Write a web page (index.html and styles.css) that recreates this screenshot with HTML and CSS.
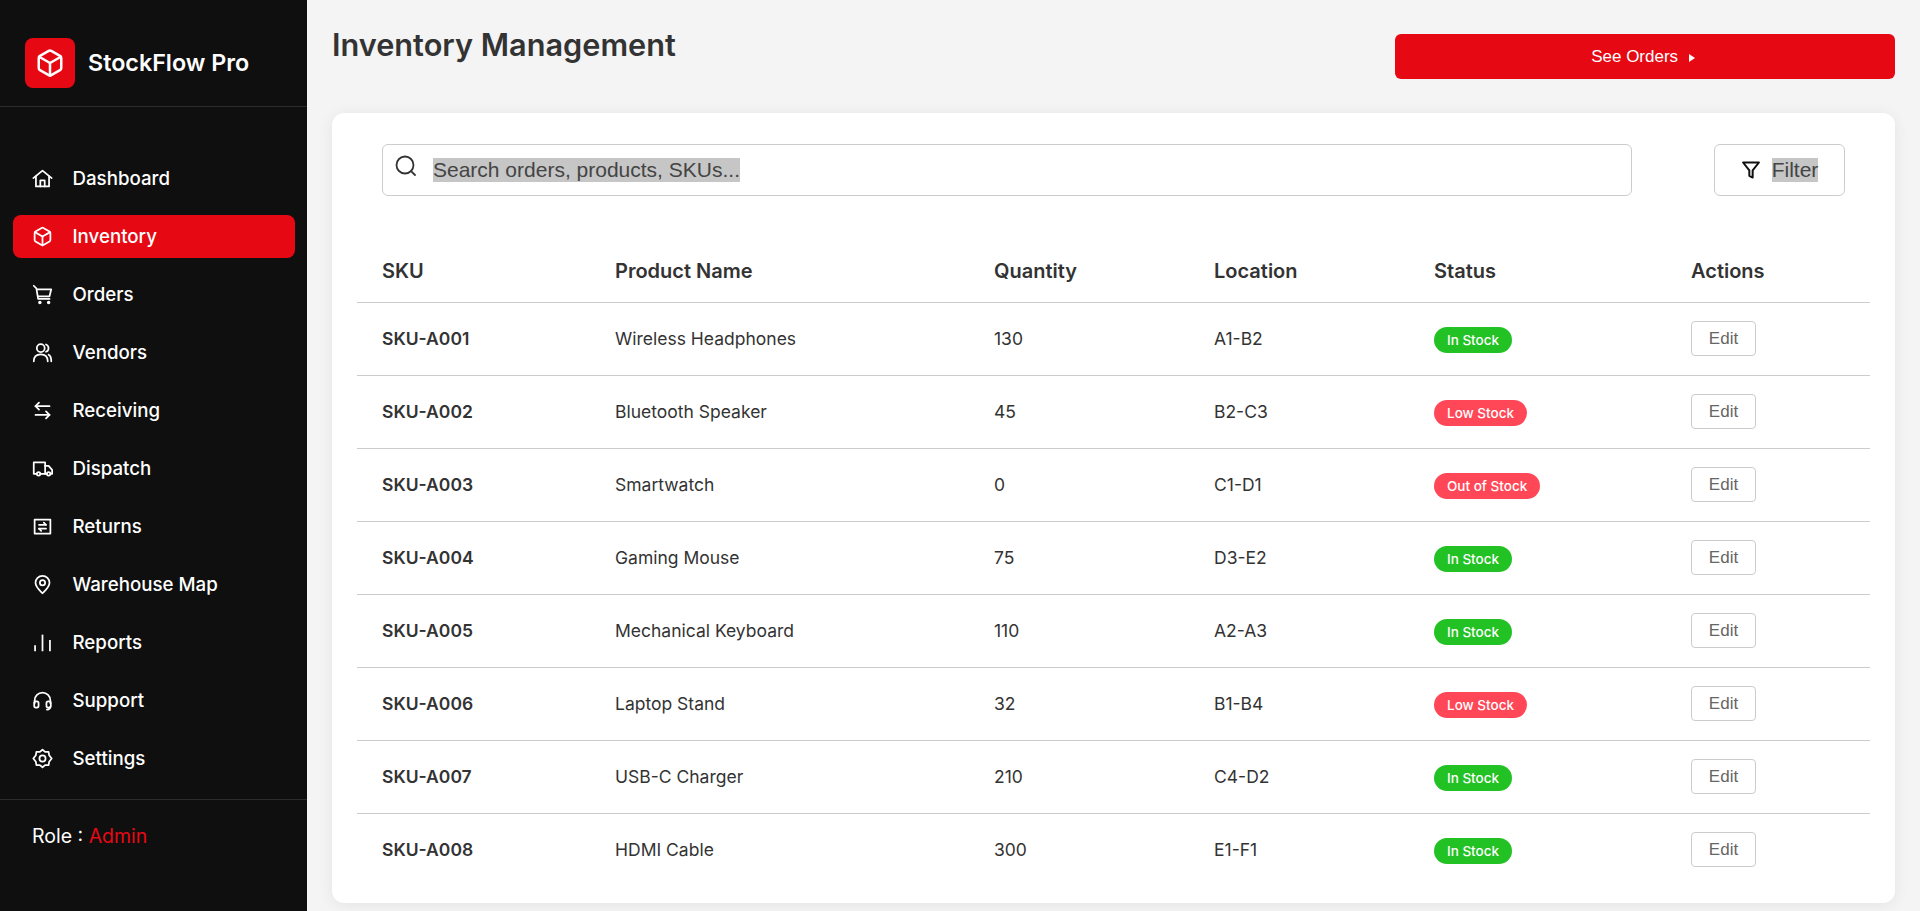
FILE: index.html
```html
<!DOCTYPE html>
<html lang="en">
<head>
    <meta charset="UTF-8">
    <meta name="viewport" content="width=device-width, initial-scale=1.0">
    <title>StockFlow Pro</title>
    <link rel="stylesheet" href="styles.css">
</head>
<body>
    <!-- Icon set, drawn once and reused below -->
    <svg class="sprite" aria-hidden="true">
        <symbol id="i-house" viewBox="0 0 24 24"><path d="M1.500 11.500 12 3l10.500 8.500"/><path d="M4.500 9.500V21h15V9.500"/><path d="M9.500 21v-7h5v7"/></symbol>
        <symbol id="i-box" viewBox="0 0 24 24"><path d="M21 8a2 2 0 0 0-1-1.730l-7-4a2 2 0 0 0-2 0l-7 4A2 2 0 0 0 3 8v8a2 2 0 0 0 1 1.730l7 4a2 2 0 0 0 2 0l7-4A2 2 0 0 0 21 16Z"/><path d="M3.300 7 12 12l8.700-5"/><path d="M12 22V12"/></symbol>
        <symbol id="i-cart" viewBox="0 0 24 24"><circle cx="9" cy="21" r="1"/><circle cx="19" cy="21" r="1"/><path d="M2 2l3 3 2 12h13"/><path d="M5.500 6H22l-2 8H7"/></symbol>
        <symbol id="i-users" viewBox="0 0 24 24"><circle cx="10" cy="7" r="4.500"/><path d="M2 22c0-5 3-8 8-8s8 3 8 8"/><path d="M16 2.800a4.500 4.500 0 0 1 0 8.400"/><path d="M19 14.500c2 1 3 4 3 7.500"/></symbol>
        <symbol id="i-swap" viewBox="0 0 24 24"><path d="M8 3 4 7l4 4"/><path d="M4 7h16"/><path d="m16 13 4 4-4 4"/><path d="M20 17H4"/></symbol>
        <symbol id="i-truck" viewBox="0 0 24 24"><path d="M5.500 18H2V5h13v13H9.500"/><path d="M15 9h4l4 4.500V18h-2"/><path d="M15 18h2"/><circle cx="7.500" cy="18" r="2"/><circle cx="19" cy="18" r="2"/></symbol>
        <symbol id="i-returns" viewBox="0 0 24 24"><rect x="3" y="4" width="18" height="16"/><path d="M8 10h8"/><path d="m13.500 7.500 2.500 2.500"/><path d="M16 14.500H8"/><path d="m10.500 17-2.500-2.500"/></symbol>
        <symbol id="i-pin" viewBox="0 0 24 24"><path d="M20 10c0 5-5.500 9.500-8 12-2.500-2.500-8-7-8-12a8 8 0 0 1 16 0Z"/><circle cx="12" cy="10" r="3"/></symbol>
        <symbol id="i-bars" viewBox="0 0 24 24"><path class="butt" d="M3.500 22v-7"/><path class="butt" d="M12 22V3"/><path class="butt" d="M20.500 22V9"/></symbol>
        <symbol id="i-headset" viewBox="0 0 24 24"><path d="M3 15v-3a9 9 0 0 1 18 0v3"/><rect x="2.500" y="13" width="5" height="7" rx="2"/><rect x="16.500" y="13" width="5" height="7" rx="2"/><path d="M21 19c0 2-1 3-4 3.500"/></symbol>
        <symbol id="i-gear" viewBox="0 0 24 24"><path d="M12 2l3 2.500 4-.2.600 4 2.900 3.700-2.900 3.700-.6 4-4-.2-3 2.500-3-2.500-4 .2-.6-4L1.500 12l2.900-3.700.6-4 4 .2Z"/><circle cx="12" cy="12" r="3.500"/></symbol>
    </svg>

    <div class="layout">
        <aside class="sidebar">
            <div class="brand">
                <span class="brand-logo"><svg><use href="#i-box"/></svg></span>
                <span class="brand-name">StockFlow Pro</span>
            </div>

            <nav class="nav">
                <a class="nav-item" href="#"><svg><use href="#i-house"/></svg>Dashboard</a>
                <a class="nav-item active" href="#"><svg><use href="#i-box"/></svg>Inventory</a>
                <a class="nav-item" href="#"><svg><use href="#i-cart"/></svg>Orders</a>
                <a class="nav-item" href="#"><svg><use href="#i-users"/></svg>Vendors</a>
                <a class="nav-item" href="#"><svg><use href="#i-swap"/></svg>Receiving</a>
                <a class="nav-item" href="#"><svg><use href="#i-truck"/></svg>Dispatch</a>
                <a class="nav-item" href="#"><svg><use href="#i-returns"/></svg>Returns</a>
                <a class="nav-item" href="#"><svg><use href="#i-pin"/></svg>Warehouse Map</a>
                <a class="nav-item" href="#"><svg><use href="#i-bars"/></svg>Reports</a>
                <a class="nav-item" href="#"><svg><use href="#i-headset"/></svg>Support</a>
                <a class="nav-item" href="#"><svg><use href="#i-gear"/></svg>Settings</a>
            </nav>

            <div class="role">Role : <span class="role-name">Admin</span></div>
        </aside>

        <main class="main">
            <div class="top-row">
                <h1 class="page-title">Inventory Management</h1>
                <button class="see-orders" type="button">See Orders <span class="caret"></span></button>
            </div>

            <section class="card">
                <div class="toolbar">
                    <div class="search">
                        <svg class="search-icon" viewBox="0 0 24 24"><circle cx="11" cy="11" r="8.500"/><path d="m21 21-3.700-3.700"/></svg>
                        <span class="highlight">Search orders, products, SKUs...</span>
                    </div>
                    <button class="filter" type="button">
                        <svg class="filter-icon" viewBox="0 0 24 24"><path d="M2.500 3h19l-7.500 9.500V21l-4-2v-6.500Z"/></svg>
                        <span class="highlight">Filter</span>
                    </button>
                </div>

                <table class="stock-table">
                    <thead>
                        <tr>
                            <th class="col-sku">SKU</th>
                            <th class="col-name">Product Name</th>
                            <th class="col-qty">Quantity</th>
                            <th class="col-loc">Location</th>
                            <th class="col-status">Status</th>
                            <th>Actions</th>
                        </tr>
                    </thead>
                    <tbody>
                        <tr>
                            <td class="sku">SKU-A001</td><td>Wireless Headphones</td><td>130</td><td>A1-B2</td>
                            <td><span class="badge in">In Stock</span></td><td><button class="edit" type="button">Edit</button></td>
                        </tr>
                        <tr>
                            <td class="sku">SKU-A002</td><td>Bluetooth Speaker</td><td>45</td><td>B2-C3</td>
                            <td><span class="badge low">Low Stock</span></td><td><button class="edit" type="button">Edit</button></td>
                        </tr>
                        <tr>
                            <td class="sku">SKU-A003</td><td>Smartwatch</td><td>0</td><td>C1-D1</td>
                            <td><span class="badge low">Out of Stock</span></td><td><button class="edit" type="button">Edit</button></td>
                        </tr>
                        <tr>
                            <td class="sku">SKU-A004</td><td>Gaming Mouse</td><td>75</td><td>D3-E2</td>
                            <td><span class="badge in">In Stock</span></td><td><button class="edit" type="button">Edit</button></td>
                        </tr>
                        <tr>
                            <td class="sku">SKU-A005</td><td>Mechanical Keyboard</td><td>110</td><td>A2-A3</td>
                            <td><span class="badge in">In Stock</span></td><td><button class="edit" type="button">Edit</button></td>
                        </tr>
                        <tr>
                            <td class="sku">SKU-A006</td><td>Laptop Stand</td><td>32</td><td>B1-B4</td>
                            <td><span class="badge low">Low Stock</span></td><td><button class="edit" type="button">Edit</button></td>
                        </tr>
                        <tr>
                            <td class="sku">SKU-A007</td><td>USB-C Charger</td><td>210</td><td>C4-D2</td>
                            <td><span class="badge in">In Stock</span></td><td><button class="edit" type="button">Edit</button></td>
                        </tr>
                        <tr>
                            <td class="sku">SKU-A008</td><td>HDMI Cable</td><td>300</td><td>E1-F1</td>
                            <td><span class="badge in">In Stock</span></td><td><button class="edit" type="button">Edit</button></td>
                        </tr>
                    </tbody>
                </table>
            </section>
        </main>
    </div>
</body>
</html>
```

FILE: styles.css
```css
* {
    box-sizing: border-box;
}

body {
    margin: 0;
    height: 911px;
    overflow: hidden;
    font-family: 'Inter', sans-serif;
    background-color: #f4f4f4;
    color: #333;
}

.sprite {
    display: none;
}

.layout {
    display: flex;
    height: 911px;
}

/* Sidebar */
.sidebar {
    width: 307px;
    flex-shrink: 0;
    background-color: #0f0f0f;
    color: white;
    display: flex;
    flex-direction: column;
}

.sidebar svg {
    fill: none;
    stroke: currentColor;
    stroke-width: 2;
    stroke-linecap: round;
    stroke-linejoin: round;
}

.butt {
    stroke-linecap: butt;
}

.brand {
    height: 107px;
    padding: 38px 25px 0;
    display: flex;
    align-items: flex-start;
    gap: 13px;
    border-bottom: 1px solid #2c2c2c;
}

.brand-logo {
    width: 50px;
    height: 50px;
    border-radius: 8px;
    background-color: #e60914;
    display: flex;
    align-items: center;
    justify-content: center;
}

.brand-logo svg {
    width: 30px;
    height: 30px;
}

.brand-name {
    font-size: 23.3px;
    font-weight: 600;
    line-height: 50px;
}

.nav {
    padding: 50px 12px 0 13px;
    display: flex;
    flex-direction: column;
    gap: 15px;
    height: 693px;
    border-bottom: 1px solid #2c2c2c;
}

.nav-item {
    height: 43px;
    padding: 0 19px;
    display: flex;
    align-items: center;
    gap: 19.5px;
    border-radius: 8px;
    color: white;
    text-decoration: none;
    font-size: 18.7px;
    font-weight: 500;
}

.nav-item svg {
    width: 21px;
    height: 21px;
    flex-shrink: 0;
}

.nav-item.active {
    background-color: #e60914;
}

.role {
    padding: 24px 32px;
    font-size: 19.5px;
    line-height: 24px;
}

.role-name {
    color: #e60914;
}

/* Main area */
.main {
    flex: 1;
    padding: 0 25px 0 25px;
}

.top-row {
    height: 113px;
    display: flex;
    justify-content: space-between;
    align-items: flex-start;
}

.page-title {
    margin: 26px 0 0;
    font-size: 30.7px;
    font-weight: 600;
    line-height: 38px;
    color: #333;
}

.see-orders {
    width: 500px;
    height: 45px;
    margin-top: 34px;
    border: none;
    border-radius: 6px;
    background-color: #e60914;
    color: white;
    font-family: 'Liberation Sans', sans-serif;
    font-size: 17px;
    cursor: pointer;
}

.caret {
    display: inline-block;
    margin: 0 4px 0 6px;
    border-left: 6px solid white;
    border-top: 4.5px solid transparent;
    border-bottom: 4.5px solid transparent;
}

.card {
    height: 790px;
    padding: 31px 25px 0;
    background-color: white;
    border-radius: 12px;
    box-shadow: 0 2px 15px rgba(0, 0, 0, 0.07);
}

.toolbar {
    display: flex;
    justify-content: space-between;
    padding: 0 25px;
}

.search {
    width: 1250px;
    height: 52px;
    padding: 0 11px;
    display: flex;
    align-items: center;
    gap: 15px;
    border: 1px solid #ccc;
    border-radius: 6px;
}

.search-icon {
    width: 24px;
    height: 24px;
    margin-top: -8px;
    fill: none;
    stroke: #333;
    stroke-width: 1.8;
    stroke-linecap: round;
}

.highlight {
    background-color: #c6c6c6;
    color: #444;
    font-family: 'Liberation Sans', sans-serif;
    font-size: 21px;
}

.filter {
    width: 131px;
    height: 52px;
    display: flex;
    align-items: center;
    justify-content: center;
    gap: 11px;
    background-color: white;
    border: 1px solid #ccc;
    border-radius: 6px;
    cursor: pointer;
}

.filter-icon {
    width: 20px;
    height: 20px;
    fill: none;
    stroke: #111;
    stroke-width: 2.4;
    stroke-linejoin: round;
}

/* Table */
.stock-table {
    width: 100%;
    margin-top: 38px;
    border-collapse: collapse;
    table-layout: fixed;
}

.stock-table th {
    height: 68px;
    padding: 7px 25px 0;
    text-align: left;
    font-size: 20px;
    font-weight: 600;
    color: #333;
    border-bottom: 1px solid #ccc;
}

.stock-table td {
    height: 73px;
    padding: 0 25px;
    font-size: 17.5px;
    color: #333;
    border-bottom: 1px solid #ccc;
}

.stock-table tbody tr:last-child td {
    border-bottom: none;
}

.stock-table td.sku {
    font-weight: 600;
}

.col-sku { width: 233px; }
.col-name { width: 379px; }
.col-qty { width: 220px; }
.col-loc { width: 220px; }
.col-status { width: 257px; }

.badge {
    display: inline-block;
    margin-top: 3px;
    padding: 0 13px;
    height: 26px;
    line-height: 26px;
    border-radius: 13px;
    color: white;
    font-size: 13.5px;
    font-weight: 500;
    vertical-align: middle;
}

.badge.in {
    background-color: #22c124;
}

.badge.low {
    background-color: #ff4757;
}

.edit {
    width: 65px;
    height: 35px;
    display: block;
    background-color: white;
    border: 1px solid #ccc;
    border-radius: 4px;
    color: #666;
    font-family: 'Liberation Sans', sans-serif;
    font-size: 17px;
    cursor: pointer;
}
```
